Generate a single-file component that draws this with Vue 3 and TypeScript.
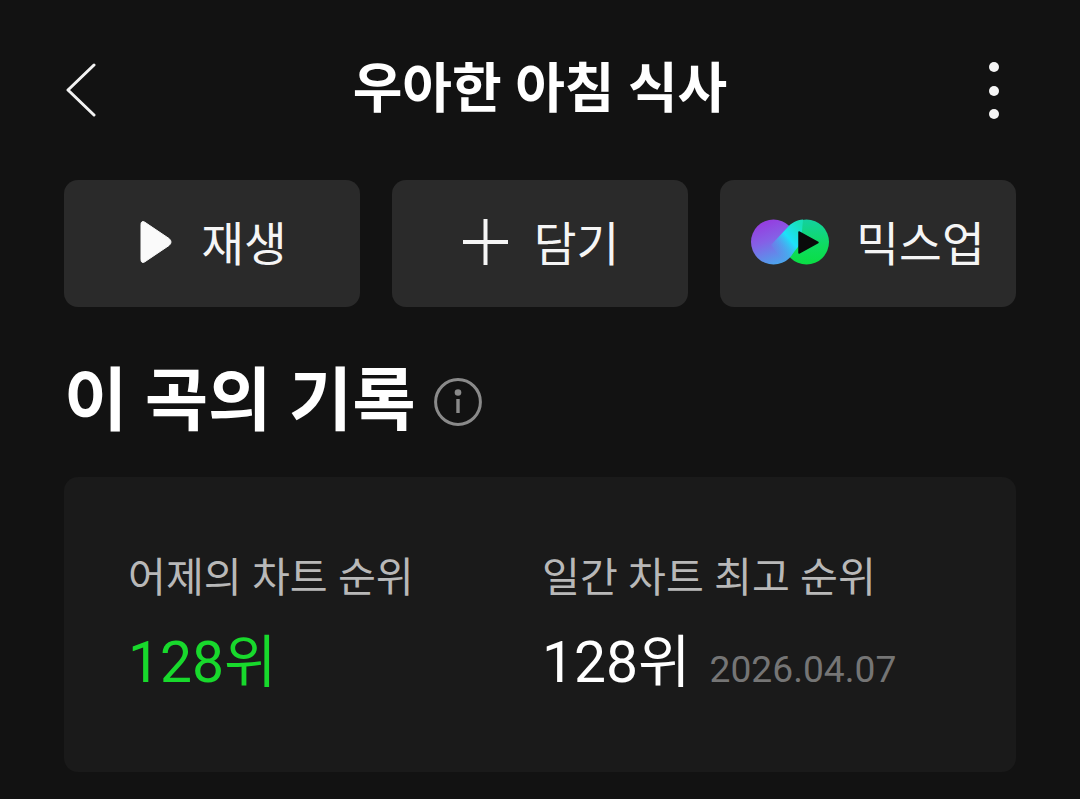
<template>
  <div class="screen">
    <header class="top-bar">
      <button class="icon-btn back">
        <svg width="32" height="54" viewBox="0 0 32 54">
          <path d="M29 2 L3 27 L29 52" fill="none" stroke="#f2f2f2" stroke-width="3" stroke-linecap="round" stroke-linejoin="round" />
        </svg>
      </button>
      <h1 class="title">{{ title }}</h1>
      <button class="icon-btn more">
        <i v-for="n in 3" :key="n" class="dot"></i>
      </button>
    </header>

    <div class="actions">
      <button class="action">
        <svg class="ic-play" width="34" height="44" viewBox="0 0 34 44">
          <path d="M2 4.5 Q2 0.5 5.5 2 L30 18.5 Q34 22 30 25.5 L5.5 42 Q2 43.5 2 39.5 Z" fill="#fafafa" stroke="#fafafa" stroke-width="1" stroke-linejoin="round" />
        </svg>
        <span class="txt">재생</span>
      </button>
      <button class="action">
        <svg class="ic-plus" width="45" height="46" viewBox="0 0 45 46">
          <path d="M0 23 H45 M22.5 0 V46" stroke="#f5f5f5" stroke-width="4" />
        </svg>
        <span class="txt">담기</span>
      </button>
      <button class="action mix">
        <svg class="ic-mix" width="78" height="46" viewBox="0 0 78 46">
          <defs>
            <linearGradient id="mixLeft" x1="0.25" y1="0.1" x2="0.6" y2="1">
              <stop offset="0" stop-color="#9440e0" />
              <stop offset="0.4" stop-color="#8560e6" />
              <stop offset="1" stop-color="#4aa6ec" />
            </linearGradient>
            <linearGradient id="mixRight" x1="0.5" y1="0" x2="0.5" y2="1">
              <stop offset="0" stop-color="#14d0a0" />
              <stop offset="0.6" stop-color="#0edc5e" />
              <stop offset="1" stop-color="#0ade44" />
            </linearGradient>
            <linearGradient id="mixBand" gradientUnits="userSpaceOnUse" x1="20" y1="32" x2="50" y2="6">
              <stop offset="0" stop-color="#5a90e8" stop-opacity="0.1" />
              <stop offset="0.55" stop-color="#1ee0fa" />
              <stop offset="1" stop-color="#18e0b8" />
            </linearGradient>
          </defs>
          <circle cx="55.5" cy="23" r="22.5" fill="url(#mixRight)" />
          <circle cx="22.5" cy="23" r="22.5" fill="url(#mixLeft)" />
          <path d="M20 26 L36 9 C40 4 46 0.8 52 0.5 L50 24 L40 37 C38 39 36 41 33 43 Z" fill="url(#mixBand)" />
          <path d="M48 13 L67 23.5 L48 34 Z" fill="#0a0a0a" stroke="#0a0a0a" stroke-width="1.5" stroke-linejoin="round" />
        </svg>
        <span class="txt">믹스업</span>
      </button>
    </div>

    <div class="section-head">
      <h2>이 곡의 기록</h2>
      <svg width="48" height="48" viewBox="0 0 48 48">
        <circle cx="24" cy="24" r="22.4" fill="none" stroke="#8a8a8a" stroke-width="3" />
        <circle cx="24" cy="14.5" r="3.3" fill="#8a8a8a" />
        <rect x="22.3" y="21" width="3.4" height="14" fill="#8a8a8a" />
      </svg>
    </div>

    <section class="card">
      <div class="stat">
        <div class="label">어제의 차트 순위</div>
        <div class="value green">128위</div>
      </div>
      <div class="stat">
        <div class="label">일간 차트 최고 순위</div>
        <div class="value">128위<span class="date">2026.04.07</span></div>
      </div>
    </section>
  </div>
</template>

<script setup lang="ts">
const title: string = '우아한 아침 식사'
</script>

<style>
html, body { margin: 0; background: #121212; }
</style>

<style scoped>
* { box-sizing: border-box; margin: 0; padding: 0; }

.screen {
  width: 1080px; height: 799px; overflow: hidden;
  background: #121212; color: #fff;
  padding: 0 64px;
  font-family: Roboto, 'Noto Sans CJK KR', sans-serif;
}
.top-bar {
  height: 180px;
  display: grid; grid-template-columns: 1fr auto 1fr; align-items: start;
}
.icon-btn { background: none; border: none; display: flex; }
.back { margin-top: 63px; margin-left: 1px; }
.title {
  margin-top: 57px;
  font-size: 54px; line-height: 66px; font-weight: 700;
  color: #fff; white-space: nowrap;
}
.more {
  flex-direction: column; gap: 13.5px;
  margin-top: 62px; margin-right: 17px; justify-self: end;
}
.dot { width: 10px; height: 10px; border-radius: 50%; background: #f5f5f5; display: block; }

.actions { display: grid; grid-template-columns: repeat(3, 296px); gap: 32px; }
.action {
  height: 127px; border: none; border-radius: 14px;
  background: #2a2a2a; color: #f5f5f5;
  font-family: inherit; font-size: 46.5px; font-weight: 400;
  display: flex; align-items: center; justify-content: center;
}
.txt { margin-top: -7px; }
.ic-play { margin-left: 2px; margin-right: 28px; margin-top: -4px; }
.ic-plus { margin-left: 2px; margin-right: 26px; margin-top: -4px; }
.ic-mix { margin-right: 27px; margin-top: -4px; }

.section-head {
  margin-top: 50px; height: 90px;
  display: flex; align-items: center; gap: 18px;
}
.section-head h2 { font-size: 69px; line-height: 90px; font-weight: 700; }

.card {
  margin-top: 30px; height: 295px;
  background: #1a1a1a; border-radius: 14px;
  padding: 71px 0 0 64px;
  display: grid; grid-template-columns: 414px 1fr;
}
.label { font-size: 41.2px; line-height: 60px; color: #b8b8b8; white-space: nowrap; }
.value {
  margin-top: 22px;
  font-size: 57px; line-height: 66px; color: #fff; white-space: nowrap;
  display: flex; align-items: baseline;
}
.green { color: #18d92c; }
.date { margin-left: 19px; font-size: 37.2px; color: #757575; }
</style>
